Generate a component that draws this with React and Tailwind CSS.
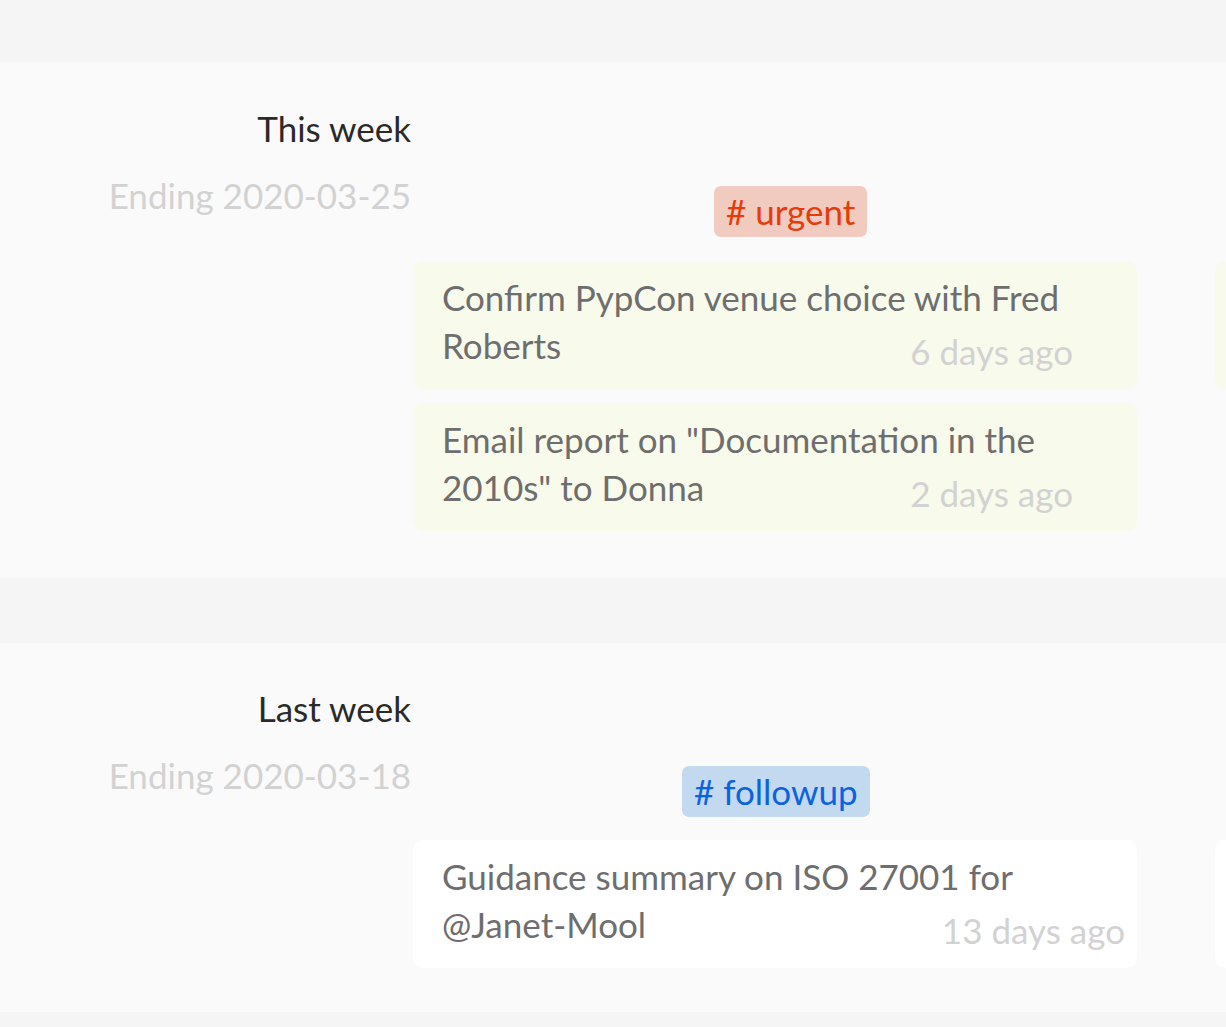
const font = { fontFamily: '"Lato", "Open Sans", sans-serif' };

const sections = [
  {
    title: "This week",
    ending: "Ending 2020-03-25",
    pt: "pt-[42px]",
    ptRight: "pt-[124px]",
    pb: "pb-[47px]",
    tag: { label: "# urgent", className: "ml-[301px] bg-[#f1cbbf] text-[#e63c0a]" },
    cardGap: "mt-[24px]",
    tone: "bg-[#f8faeb]",
    cards: [
      { lines: ["Confirm PypCon venue choice with Fred", "Roberts"], when: "6 days ago", pr: "pr-[64px]" },
      { lines: ['Email report on "Documentation in the', '2010s" to Donna'], when: "2 days ago", pr: "pr-[64px]" },
    ],
  },
  {
    title: "Last week",
    ending: "Ending 2020-03-18",
    pt: "pt-[41px]",
    ptRight: "pt-[123px]",
    pb: "pb-[44px]",
    tag: { label: "# followup", className: "ml-[269px] bg-[#c3d9f0] text-[#0b63e0]" },
    cardGap: "mt-[23px]",
    tone: "bg-white",
    cards: [
      { lines: ["Guidance summary on ISO 27001 for", "@Janet-Mool"], when: "13 days ago", pr: "pr-[12px]" },
    ],
  },
];

function Card({ card, tone }) {
  return (
    <div className={`h-[128px] rounded-[10px] ${tone} pl-[29px] pt-[12px]`}>
      <p className="pr-[64px] text-[35px] leading-[48px] text-[#6e6e6e]">{card.lines[0]}</p>
      <div className={`flex items-start justify-between ${card.pr}`}>
        <span className="text-[35px] leading-[48px] text-[#6e6e6e]">{card.lines[1]}</span>
        <span className="mt-[6px] text-[35px] leading-[48px] text-[#d2d2d2]">{card.when}</span>
      </div>
    </div>
  );
}

function Section({ s }) {
  return (
    <section className={`flex bg-[#fafafa] ${s.pb}`}>
      <div className={`w-[411px] shrink-0 text-right ${s.pt}`}>
        <h2 className="text-[35px] leading-[48px] text-[#2a2a2a]">{s.title}</h2>
        <p className="mt-[19px] text-[35px] leading-[48px] text-[#d2d2d2]">{s.ending}</p>
      </div>
      <div className="ml-[2px] flex shrink-0 gap-[78px]">
        <div className={`flex w-[724px] shrink-0 flex-col ${s.ptRight}`}>
          <span
            className={`self-start rounded-[7px] px-[12px] text-[35px] leading-[51px] ${s.tag.className}`}
          >
            {s.tag.label}
          </span>
          <div className={`flex flex-col gap-[14px] ${s.cardGap}`}>
            {s.cards.map((c) => (
              <Card key={c.lines[0]} card={c} tone={s.tone} />
            ))}
          </div>
        </div>
        <div className={`flex w-[724px] shrink-0 flex-col ${s.ptRight}`}>
          <div className="h-[51px]" />
          <div className={`h-[128px] rounded-[10px] ${s.tone} ${s.cardGap}`} />
        </div>
      </div>
    </section>
  );
}

export default function App() {
  return (
    <div style={font} className="h-[1027px] w-[1226px] overflow-hidden bg-[#f5f5f5] pt-[62px]">
      <Section s={sections[0]} />
      <div className="h-[65px]" />
      <Section s={sections[1]} />
    </div>
  );
}
